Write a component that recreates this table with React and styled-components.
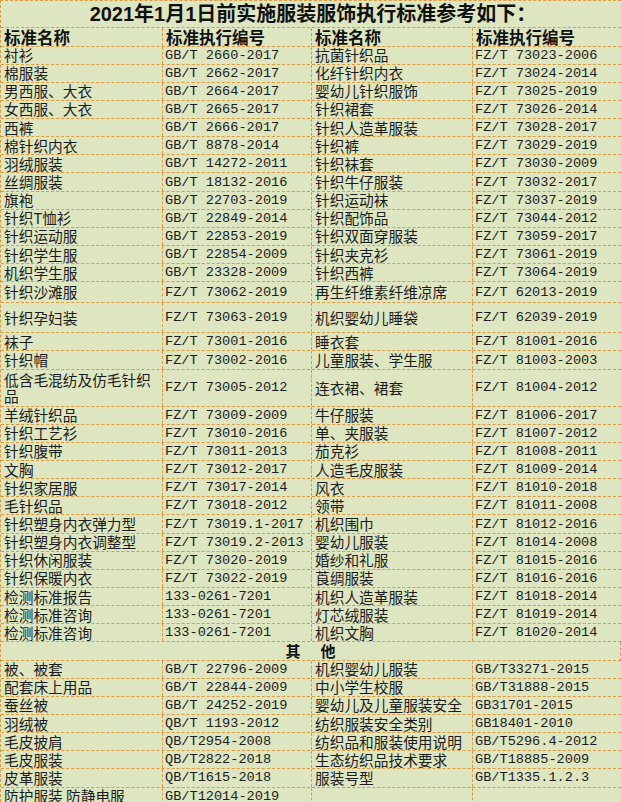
import React from "react";
import styled, { createGlobalStyle } from "styled-components";

const GlobalStyle = createGlobalStyle`
  html, body {
    margin: 0;
    padding: 0;
    background: #dde5c1;
  }
`;

const LINE = "1px dashed #e09a3c";
const COLS = "162px 149px 161px 149px";

// [名称, 编号, 名称, 编号, 行高]
const upper = [
  ["衬衫", "GB/T 2660-2017", "抗菌针织品", "FZ/T 73023-2006"],
  ["棉服装", "GB/T 2662-2017", "化纤针织内衣", "FZ/T 73024-2014"],
  ["男西服、大衣", "GB/T 2664-2017", "婴幼儿针织服饰", "FZ/T 73025-2019"],
  ["女西服、大衣", "GB/T 2665-2017", "针织裙套", "FZ/T 73026-2014"],
  ["西裤", "GB/T 2666-2017", "针织人造革服装", "FZ/T 73028-2017"],
  ["棉针织内衣", "GB/T 8878-2014", "针织裤", "FZ/T 73029-2019"],
  ["羽绒服装", "GB/T 14272-2011", "针织袜套", "FZ/T 73030-2009"],
  ["丝绸服装", "GB/T 18132-2016", "针织牛仔服装", "FZ/T 73032-2017"],
  ["旗袍", "GB/T 22703-2019", "针织运动袜", "FZ/T 73037-2019"],
  ["针织T恤衫", "GB/T 22849-2014", "针织配饰品", "FZ/T 73044-2012"],
  ["针织运动服", "GB/T 22853-2019", "针织双面穿服装", "FZ/T 73059-2017"],
  ["针织学生服", "GB/T 22854-2009", "针织夹克衫", "FZ/T 73061-2019"],
  ["机织学生服", "GB/T 23328-2009", "针织西裤", "FZ/T 73064-2019"],
  ["针织沙滩服", "FZ/T 73062-2019", "再生纤维素纤维凉席", "FZ/T 62013-2019", 21],
  ["针织孕妇装", "FZ/T 73063-2019", "机织婴幼儿睡袋", "FZ/T 62039-2019", 30],
  ["袜子", "FZ/T 73001-2016", "睡衣套", "FZ/T 81001-2016"],
  ["针织帽", "FZ/T 73002-2016", "儿童服装、学生服", "FZ/T 81003-2003"],
  ["低含毛混纺及仿毛针织品", "FZ/T 73005-2012", "连衣裙、裙套", "FZ/T 81004-2012", 37],
  ["羊绒针织品", "FZ/T 73009-2009", "牛仔服装", "FZ/T 81006-2017"],
  ["针织工艺衫", "FZ/T 73010-2016", "单、夹服装", "FZ/T 81007-2012"],
  ["针织腹带", "FZ/T 73011-2013", "茄克衫", "FZ/T 81008-2011"],
  ["文胸", "FZ/T 73012-2017", "人造毛皮服装", "FZ/T 81009-2014"],
  ["针织家居服", "FZ/T 73017-2014", "风衣", "FZ/T 81010-2018"],
  ["毛针织品", "FZ/T 73018-2012", "领带", "FZ/T 81011-2008"],
  ["针织塑身内衣弹力型", "FZ/T 73019.1-2017", "机织围巾", "FZ/T 81012-2016"],
  ["针织塑身内衣调整型", "FZ/T 73019.2-2013", "婴幼儿服装", "FZ/T 81014-2008"],
  ["针织休闲服装", "FZ/T 73020-2019", "婚纱和礼服", "FZ/T 81015-2016"],
  ["针织保暖内衣", "FZ/T 73022-2019", "莨绸服装", "FZ/T 81016-2016"],
  ["检测标准报告", "133-0261-7201", "机织人造革服装", "FZ/T 81018-2014"],
  ["检测标准咨询", "133-0261-7201", "灯芯绒服装", "FZ/T 81019-2014"],
  ["检测标准咨询", "133-0261-7201", "机织文胸", "FZ/T 81020-2014"],
];

const others = [
  ["被、被套", "GB/T 22796-2009", "机织婴幼儿服装", "GB/T33271-2015"],
  ["配套床上用品", "GB/T 22844-2009", "中小学生校服", "GB/T31888-2015"],
  ["蚕丝被", "GB/T 24252-2019", "婴幼儿及儿童服装安全", "GB31701-2015"],
  ["羽绒被", "QB/T 1193-2012", "纺织服装安全类别", "GB18401-2010"],
  ["毛皮披肩", "QB/T2954-2008", "纺织品和服装使用说明", "GB/T5296.4-2012"],
  ["毛皮服装", "QB/T2822-2018", "生态纺织品技术要求", "GB/T18885-2009"],
  ["皮革服装", "QB/T1615-2018", "服装号型", "GB/T1335.1.2.3"],
  ["防护服装 防静电服", "GB/T12014-2019", "", ""],
];

function DataRow({ row }) {
  const [n1, c1, n2, c2, h] = row;
  return (
    <Row $h={h}>
      <NameCell>{n1}</NameCell>
      <CodeCell>{c1}</CodeCell>
      <NameCell>{n2}</NameCell>
      <CodeCell>{c2}</CodeCell>
    </Row>
  );
}

export default function App() {
  return (
    <>
      <GlobalStyle />
      <Sheet>
        <TitleRow>2021年1月1日前实施服装服饰执行标准参考如下：</TitleRow>
        <Row $h={18.5}>
          <HeadCell>标准名称</HeadCell>
          <HeadCell>标准执行编号</HeadCell>
          <HeadCell>标准名称</HeadCell>
          <HeadCell>标准执行编号</HeadCell>
        </Row>
        {upper.map((r, i) => (
          <DataRow key={"u" + i} row={r} />
        ))}
        <SectionRow>
          <span>其</span>
          <span>他</span>
        </SectionRow>
        {others.map((r, i) => (
          <DataRow key={"o" + i} row={r} />
        ))}
      </Sheet>
    </>
  );
}

const Sheet = styled.div`
  width: 621px;
  height: 802px;
  overflow: hidden;
  box-sizing: border-box;
  border-top: ${LINE};
  border-left: ${LINE};
  background: #dde5c1;
  color: #1c1c1c;
`;

const TitleRow = styled.div`
  height: 27px;
  box-sizing: border-box;
  border-bottom: ${LINE};
  display: flex;
  align-items: center;
  justify-content: center;
  padding-left: 4px;
  font-family: "Liberation Sans", "Noto Sans CJK SC", sans-serif;
  font-weight: bold;
  font-size: 20px;
  line-height: 24px;
  color: #111;
`;

const Row = styled.div`
  display: grid;
  grid-template-columns: ${COLS};
  height: ${(p) => p.$h || 18.15}px;
  box-sizing: border-box;
  border-bottom: ${LINE};
`;

const Cell = styled.div`
  display: flex;
  align-items: center;
  box-sizing: border-box;
  padding-left: 3px;
  border-right: ${LINE};
  overflow: hidden;
`;

const HeadCell = styled(Cell)`
  font-family: "Noto Sans CJK SC", sans-serif;
  font-weight: bold;
  font-size: 16.5px;
  line-height: 16px;
  color: #111;
`;

const NameCell = styled(Cell)`
  font-family: "Noto Sans CJK SC", sans-serif;
  font-size: 14.7px;
  line-height: 16px;
  padding-right: 2px;
`;

const CodeCell = styled(Cell)`
  font-family: "Liberation Mono", monospace;
  font-size: 13.6px;
  line-height: 15px;
  white-space: pre;
  padding-left: 2px;
`;

const SectionRow = styled.div`
  height: 18.15px;
  box-sizing: border-box;
  border-bottom: ${LINE};
  border-right: ${LINE};
  display: flex;
  align-items: center;
  justify-content: center;
  gap: 20px;
  font-family: "Noto Sans CJK SC", sans-serif;
  font-weight: bold;
  font-size: 15px;
  line-height: 16px;
  color: #111;
`;
